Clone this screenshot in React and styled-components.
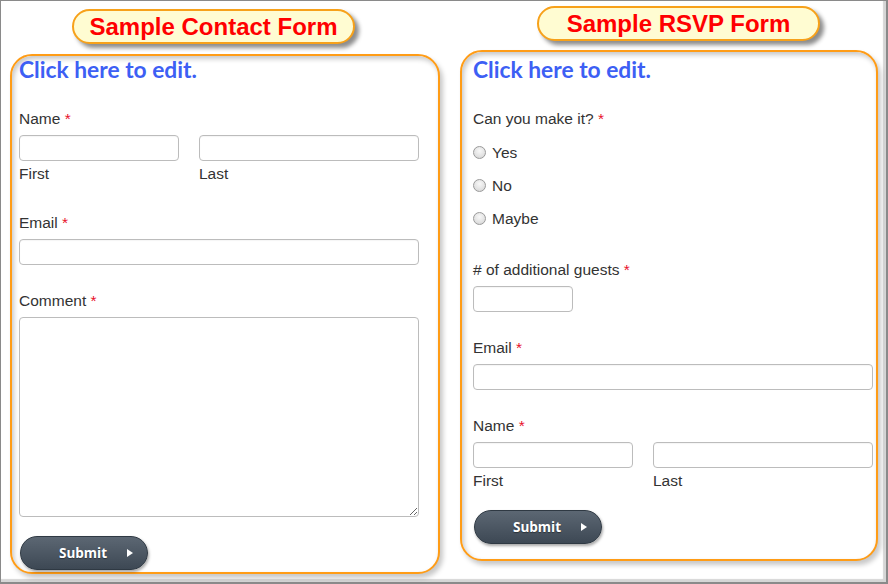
import React from "react";
import styled, { createGlobalStyle } from "styled-components";

const Global = createGlobalStyle`
  html, body { margin: 0; padding: 0; background: #fff; }
  body { width: 888px; height: 584px; overflow: hidden; }
  * { box-sizing: border-box; }
`;

const Frame = styled.div`
  width: 888px;
  height: 584px;
  border-top: 1px solid #8a8a8a;
  border-left: 1px solid #8a8a8a;
  border-right: 2px solid #8a8a8a;
  border-bottom: 2px solid #8a8a8a;
  box-shadow: inset -3px -3px 1px #d6d6d6;
  display: flex;
  align-items: flex-start;
  background: #fff;
  font-family: "Liberation Sans", Arial, sans-serif;
`;

const Column = styled.div`
  display: flex;
  flex-direction: column;
  margin-left: ${(p) => p.$left}px;
  width: ${(p) => p.$width}px;
`;

const Pill = styled.div`
  width: 283px;
  height: 35px;
  margin-left: ${(p) => p.$left}px;
  margin-top: ${(p) => p.$top}px;
  border: 2px solid #f7a11a;
  border-radius: 18px;
  background: #fffcd2;
  box-shadow: 4px 4px 4px rgba(0, 0, 0, 0.45);
  display: flex;
  align-items: center;
  justify-content: center;
  font-family: "Liberation Sans", Arial, sans-serif;
  font-weight: 700;
  font-size: 24px;
  color: #ff0000;
  padding-top: 1px;
`;

const Card = styled.div`
  margin-top: ${(p) => p.$top}px;
  height: ${(p) => p.$height}px;
  border: 2px solid #ff9c16;
  border-radius: 22px;
  box-shadow: inset 2px 3px 5px rgba(0, 0, 0, 0.22), 3px 4px 5px rgba(0, 0, 0, 0.22);
  padding: ${(p) => p.$padTop}px 0 0 ${(p) => p.$padLeft}px;
  background: #fff;
`;

const Heading = styled.div`
  font-family: Lato, "Open Sans", sans-serif;
  font-weight: 700;
  font-size: 22.8px;
  line-height: 26px;
  color: #3d5ff4;
`;

const Form = styled.div`
  width: 400px;
  display: flex;
  flex-direction: column;
`;

const Label = styled.div`
  font-size: 15.5px;
  line-height: 18px;
  color: #333;
  margin-top: ${(p) => p.$top ?? 27}px;
`;

const Req = styled.span`
  color: #e8102a;
`;

const Input = styled.div`
  width: ${(p) => p.$width || 400}px;
  height: 26px;
  border: 1px solid #bcbcbc;
  border-radius: 4px;
  background: #fff;
  box-shadow: inset 0 1px 1px rgba(0, 0, 0, 0.04);
  margin-top: 7px;
`;

const TextArea = styled.textarea`
  display: block;
  width: 400px;
  height: 200px;
  margin: 7px 0 0 0;
  border: 1px solid #bcbcbc;
  border-radius: 4px;
  background: #fff;
  resize: both;
  font-family: inherit;
  outline: none;
`;

const NameRow = styled.div`
  display: flex;
  gap: 20px;
`;

const NameCol = styled.div`
  display: flex;
  flex-direction: column;
`;

const SubLabel = styled.div`
  font-size: 15.5px;
  line-height: 18px;
  color: #333;
  margin-top: 4px;
`;

const RadioRow = styled.div`
  display: flex;
  align-items: center;
  gap: 6px;
  height: 18px;
  margin-top: ${(p) => p.$top}px;
  font-size: 15.5px;
  color: #333;
`;

const RadioDot = styled.span`
  width: 13px;
  height: 13px;
  border-radius: 50%;
  border: 1px solid #9a9a9a;
  background: radial-gradient(circle at 50% 35%, #f8f8f8 0%, #e2e2e2 60%, #cfcfcf 100%);
  flex: none;
  margin-top: -2px;
`;

const Submit = styled.div`
  width: 128px;
  height: 34px;
  margin-top: ${(p) => p.$top}px;
  margin-left: 1px;
  border-radius: 17px;
  border: 1px solid #2f3943;
  background: linear-gradient(#5c6773, #3d4854);
  box-shadow: 1px 2px 3px rgba(0, 0, 0, 0.35);
  display: flex;
  align-items: center;
  padding-left: 38px;
  color: #fff;
  font-family: "Open Sans", "DejaVu Sans", sans-serif;
  font-weight: 700;
  font-size: 13.5px;
  text-shadow: 0 1px 1px rgba(0, 0, 0, 0.4);
`;

const Arrow = styled.span`
  width: 0;
  height: 0;
  border-top: 4px solid transparent;
  border-bottom: 4px solid transparent;
  border-left: 6px solid #fff;
  margin-left: 20px;
`;

const NameFields = () => (
  <NameRow>
    <NameCol>
      <Input $width={160} />
      <SubLabel>First</SubLabel>
    </NameCol>
    <NameCol>
      <Input $width={220} />
      <SubLabel>Last</SubLabel>
    </NameCol>
  </NameRow>
);

const Required = ({ children, top }) => (
  <Label $top={top}>
    {children} <Req>*</Req>
  </Label>
);

export default function App() {
  return (
    <>
      <Global />
      <Frame>
        <Column $left={9} $width={430}>
          <Pill $left={62} $top={8}>Sample Contact Form</Pill>
          <Card $top={10} $height={520} $padTop={0} $padLeft={7}>
            <Heading>Click here to edit.</Heading>
            <Form>
              <Required top={28}>Name</Required>
              <NameFields />
              <Required top={31}>Email</Required>
              <Input />
              <Required>Comment</Required>
              <TextArea />
              <Submit $top={19}>
                Submit
                <Arrow />
              </Submit>
            </Form>
          </Card>
        </Column>
        <Column $left={20} $width={418}>
          <Pill $left={77} $top={5}>Sample RSVP Form</Pill>
          <Card $top={9} $height={511} $padTop={4} $padLeft={11}>
            <Heading>Click here to edit.</Heading>
            <Form>
              <Required top={28}>Can you make it?</Required>
              <RadioRow $top={16}>
                <RadioDot />
                Yes
              </RadioRow>
              <RadioRow $top={15}>
                <RadioDot />
                No
              </RadioRow>
              <RadioRow $top={15}>
                <RadioDot />
                Maybe
              </RadioRow>
              <Required top={33}># of additional guests</Required>
              <Input $width={100} />
              <Required>Email</Required>
              <Input />
              <Required>Name</Required>
              <NameFields />
              <Submit $top={20}>
                Submit
                <Arrow />
              </Submit>
            </Form>
          </Card>
        </Column>
      </Frame>
    </>
  );
}
